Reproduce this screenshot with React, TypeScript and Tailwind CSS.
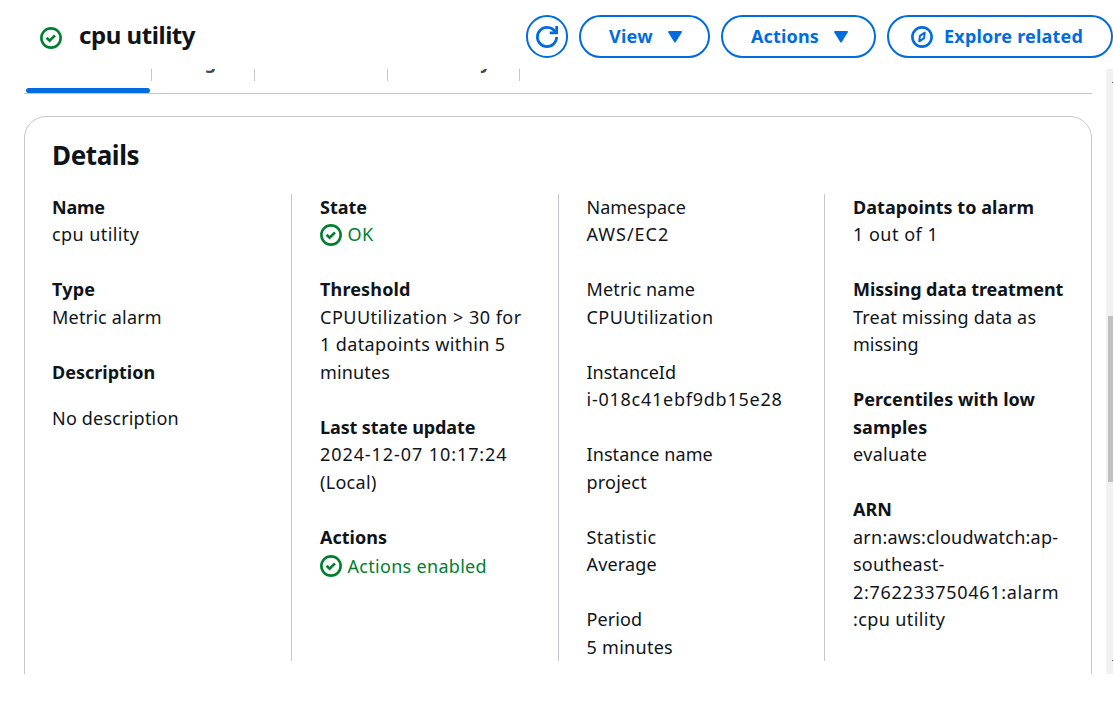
import React from "react";

const LINE = "leading-[27.5px]";

function CheckCircle({ className = "" }: { className?: string }) {
  return (
    <svg viewBox="0 0 16 16" fill="none" stroke="#00802f" strokeWidth="1.9" className={`h-[22px] w-[22px] shrink-0 ${className}`}>
      <circle cx="8" cy="8" r="7" />
      <path d="m4.8 7.8 2.2 2.2 3.9-3.9" />
    </svg>
  );
}

function RefreshIcon() {
  return (
    <svg viewBox="0 0 16 16" fill="none" stroke="currentColor" strokeWidth="2" className="h-[22px] w-[22px]">
      <path d="M15 8c0 3.87-3.13 7-7 7s-7-3.13-7-7 3.13-7 7-7c2.79 0 5.2 1.63 6.33 4" />
      <path d="M10 5h5V0" />
    </svg>
  );
}

function CompassIcon() {
  return (
    <svg viewBox="0 0 16 16" fill="none" stroke="currentColor" className="h-[22px] w-[22px] shrink-0">
      <circle cx="8" cy="8" r="7" strokeWidth="1.9" />
      <path d="M10 4.8 6.5 7.2l-.5 4 3.5-2.4z" strokeWidth="1.4" strokeLinejoin="round" />
    </svg>
  );
}

function Caret() {
  return (
    <svg viewBox="0 0 14 12" className="h-[12px] w-[14px] shrink-0" fill="currentColor">
      <path d="M1 0h12c.8 0 1.2.9.7 1.5L7.8 10.9a1 1 0 0 1-1.6 0L.3 1.5C-.2.9.2 0 1 0z" />
    </svg>
  );
}

const BUTTON =
  "flex h-[43px] shrink-0 items-center rounded-full border-2 border-[#006ce0] text-[18px] font-bold text-[#006ce0]";

type Item = {
  label: string;
  labelClass: string;
  lines: { text: string; track: string }[];
  ok?: boolean;
  gap?: string;
};

const B = "font-bold";

const columns: { box: string; items: Item[] }[] = [
  {
    box: "w-[240px] border-r",
    items: [
      { label: "Name", labelClass: "font-bold tracking-[-0.2px]", lines: [{ text: "cpu utility", track: "tracking-[0.42px]" }] },
      { label: "Type", labelClass: "font-bold tracking-[0.2px]", lines: [{ text: "Metric alarm", track: "tracking-[0.2px]" }] },
      { label: "Description", labelClass: B, gap: "mt-[18.5px]", lines: [{ text: "No description", track: "tracking-[0.2px]" }] },
    ],
  },
  {
    box: "w-[267px] border-r pl-[28px]",
    items: [
      { label: "State", labelClass: B, ok: true, lines: [{ text: "OK", track: "tracking-[0.4px]" }] },
      {
        label: "Threshold",
        labelClass: "font-bold tracking-[0.15px]",
        lines: [
          { text: "CPUUtilization > 30 for", track: "tracking-[0.5px]" },
          { text: "1 datapoints within 5", track: "tracking-[0.38px]" },
          { text: "minutes", track: "tracking-[0.15px]" },
        ],
      },
      {
        label: "Last state update",
        labelClass: "font-bold tracking-[-0.1px]",
        lines: [
          { text: "2024-12-07 10:17:24", track: "tracking-[0.92px]" },
          { text: "(Local)", track: "tracking-[0.3px]" },
        ],
      },
      { label: "Actions", labelClass: B, ok: true, gap: "mt-[1.5px]", lines: [{ text: "Actions enabled", track: "tracking-[0.3px]" }] },
    ],
  },
  {
    box: "w-[266px] border-r pl-[27.5px]",
    items: [
      { label: "Namespace", labelClass: "", lines: [{ text: "AWS/EC2", track: "tracking-[1px]" }] },
      { label: "Metric name", labelClass: "tracking-[0.17px]", lines: [{ text: "CPUUtilization", track: "tracking-[0.45px]" }] },
      { label: "InstanceId", labelClass: "", lines: [{ text: "i-018c41ebf9db15e28", track: "tracking-[0.75px]" }] },
      { label: "Instance name", labelClass: "tracking-[0.08px]", lines: [{ text: "project", track: "tracking-[0.2px]" }] },
      { label: "Statistic", labelClass: "tracking-[0.45px]", lines: [{ text: "Average", track: "tracking-[0.15px]" }] },
      { label: "Period", labelClass: "tracking-[0.1px]", lines: [{ text: "5 minutes", track: "tracking-[0.28px]" }] },
    ],
  },
  {
    box: "flex-1 pl-[28px]",
    items: [
      { label: "Datapoints to alarm", labelClass: "font-bold tracking-[0.05px]", lines: [{ text: "1 out of 1", track: "tracking-[0.5px]" }] },
      {
        label: "Missing data treatment",
        labelClass: "font-bold tracking-[-0.06px]",
        lines: [
          { text: "Treat missing data as", track: "tracking-[0.2px]" },
          { text: "missing", track: "" },
        ],
      },
      {
        label: "Percentiles with low\nsamples",
        labelClass: "font-bold tracking-[0.05px]",
        lines: [{ text: "evaluate", track: "tracking-[0.35px]" }],
      },
      {
        label: "ARN",
        labelClass: B,
        lines: [
          { text: "arn:aws:cloudwatch:ap-", track: "tracking-[0.25px]" },
          { text: "southeast-", track: "tracking-[0.2px]" },
          { text: "2:762233750461:alarm", track: "tracking-[0.68px]" },
          { text: ":cpu utility", track: "tracking-[0.4px]" },
        ],
      },
    ],
  },
];

function Field({ item }: { item: Item }) {
  return (
    <div className={LINE}>
      <div className={`whitespace-pre ${item.labelClass}`}>{item.label}</div>
      <div className={item.gap ?? ""}>
        {item.lines.map((l) =>
          item.ok ? (
            <div key={l.text} className="flex items-center gap-[5.5px] text-[#00802f]">
              <CheckCircle />
              <span className={l.track}>{l.text}</span>
            </div>
          ) : (
            <div key={l.text} className={`whitespace-pre ${l.track}`}>{l.text}</div>
          )
        )}
      </div>
    </div>
  );
}

const tabs = [
  { name: "Details", cls: "w-[128px] border-r pl-[36px] text-[#006ce0]" },
  { name: "Tags", cls: "w-[103px] border-r pl-[33px]" },
  { name: "Actions", cls: "w-[133px] border-r pl-[36px]" },
  { name: "History", cls: "w-[132px] border-r pl-[37px]" },
  { name: "Parent alarms", cls: "w-[204px] pl-[39px] tracking-[0.5px]" },
];

export default function App() {
  return (
    <div className="flex h-[709px] w-[1113px] flex-col overflow-hidden bg-white font-['Noto_Sans',sans-serif] text-[18px] text-[#0f141a]">
      <header className="flex h-[69px] shrink-0 items-start pt-[15px] pl-[40px]">
        <CheckCircle className="mt-[12px]" />
        <h1 className="ml-[17px] w-[447px] text-[24px] leading-[40px] font-bold tracking-[-0.45px]">cpu utility</h1>
        <div className="flex shrink-0 gap-[11px]">
          <button className={`${BUTTON} w-[42px] justify-center`}>
            <RefreshIcon />
          </button>
          <button className={`${BUTTON} w-[131px] pl-[28px]`}>
            <span className="w-[59px] text-left tracking-[0.25px]">View</span>
            <Caret />
          </button>
          <button className={`${BUTTON} w-[155px] pl-[28px]`}>
            <span className="w-[83px] text-left tracking-[0.15px]">Actions</span>
            <Caret />
          </button>
          <button className={`${BUTTON} w-[226px] pl-[22px]`}>
            <CompassIcon />
            <span className="ml-[11px] tracking-[0.2px] whitespace-nowrap">Explore related</span>
          </button>
        </div>
      </header>

      <div className="flex h-[605px] shrink-0 overflow-hidden">
        <main className="flex w-[1106px] flex-col pl-[24px]">
          <nav className="h-[25px] w-[1068px] shrink-0 overflow-hidden border-b border-[#c6c6cd]">
            <div className="-mt-[18px] flex h-[30px] font-bold text-[#424650]">
              {tabs.map((t) => (
                <div key={t.name} className={`border-[#c6c6cd] leading-[25px] whitespace-nowrap ${t.cls}`}>
                  <div className="-mt-[1px] origin-top scale-y-[1.015]">{t.name}</div>
                </div>
              ))}
            </div>
            <div className="mt-[7px] ml-[2px] h-[5px] w-[124px] rounded-full bg-[#006ce0]" />
          </nav>

          <section className="mt-[22px] h-[620px] w-[1068px] shrink-0 rounded-t-[22px] border border-[#c6c6cd] pl-[27px]">
            <h2 className="mt-[21px] h-[56px] text-[26px] leading-[34px] font-bold tracking-[-0.4px]">Details</h2>
            <div className="flex h-[467px]">
              {columns.map((c, i) => (
                <div key={i} className={`flex shrink-0 flex-col border-[#c6c6cd] ${c.box}`}>
                  <div className="-mt-[0.3px] flex flex-col gap-[27.5px]">
                    {c.items.map((it) => (
                      <Field key={it.label} item={it} />
                    ))}
                  </div>
                </div>
              ))}
            </div>
          </section>
        </main>
        <div className="flex w-[7px] flex-col bg-[#f1f1f1]">
          <div className="mt-[13px] ml-auto h-px w-px bg-[#505050]" />
          <div className="mt-[233px] ml-[2px] h-[166px] bg-[#c1c1c1]" />
          <div className="mt-[178px] ml-auto h-px w-px bg-[#505050]" />
        </div>
      </div>
    </div>
  );
}
